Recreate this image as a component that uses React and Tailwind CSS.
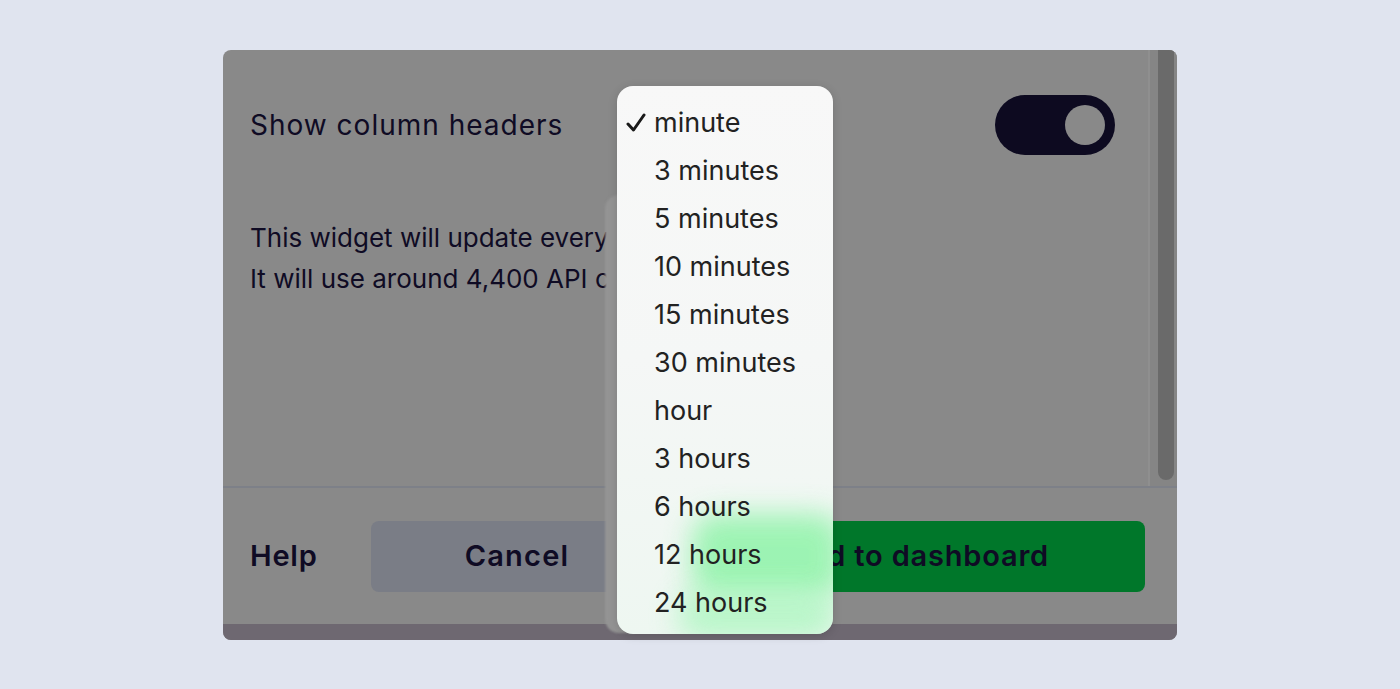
import React from "react";

const items = [
  "minute",
  "3 minutes",
  "5 minutes",
  "10 minutes",
  "15 minutes",
  "30 minutes",
  "hour",
  "3 hours",
  "6 hours",
  "12 hours",
  "24 hours",
];

export default function App() {
  return (
    <div className="relative w-full h-[689px] bg-[#e0e4ef] pt-[50px] pl-[223px] overflow-hidden" style={{ fontFamily: "Inter, 'Noto Sans', sans-serif" }}>
      <div className="w-[954px] h-[590px] rounded-[8px] overflow-hidden bg-[#898989] flex flex-col text-[#0f0b24]">
        <div className="flex h-[436px]">
          <div className="flex-1 pl-[27px] pr-[33px] pt-[45px]">
            <div className="flex items-center justify-between h-[60px]">
              <span className="text-[28px] leading-none tracking-[1px]">Show column headers</span>
              <div className="w-[120px] h-[60px] rounded-full bg-[#0d0a20] flex items-center justify-end pr-[10px]">
                <div className="w-[40px] h-[40px] rounded-full bg-[#898989]" />
              </div>
            </div>
            <div className="mt-[62px] text-[26px] leading-[41px]">
              <div>This widget will update every</div>
              <div>It will use around 4,400 API c</div>
            </div>
          </div>
          <div className="w-[29px] border-l-2 border-[#8f8f8f] bg-[#858585] flex justify-center pl-[4px]">
            <div className="w-[16px] h-[430px] rounded-b-full bg-[#6a6a6a]" />
          </div>
        </div>
        <div className="h-[2px] bg-[#7d8088]" />
        <div className="h-[136px] flex items-center pl-[27px] pr-[32px]">
          <span className="text-[29px] font-semibold tracking-[0.8px] w-[121px]">Help</span>
          <div className="w-[292px] h-[71px] rounded-[8px] bg-[#7a7d86] flex items-center justify-center text-[29px] font-semibold tracking-[1.2px]">
            Cancel
          </div>
          <div className="ml-[16px] flex-1 h-[71px] rounded-[8px] bg-[#00772a] flex items-center justify-center text-[29px] font-semibold tracking-[0.8px] pl-[12px]">
            Add to dashboard
          </div>
        </div>
        <div className="flex-1 bg-[#6e6871]" />
      </div>

      <div className="absolute left-[605px] top-[195px] w-[30px] h-[438px] rounded-l-[14px] bg-[#949494] blur-[1px]" />

      <div className="absolute left-[617px] top-[86px] w-[216px] h-[548px] rounded-[16px] overflow-hidden bg-gradient-to-b from-[#f8f8f8] via-[#f5f7f6] to-[#eef7f1] shadow-[0_2px_10px_rgba(0,0,0,0.15)]">
        <div className="absolute left-[75px] top-[428px] w-[150px] h-[85px] rounded-[24px] bg-[#8ef3a8] blur-[14px] opacity-85" />
        <div className="absolute left-[60px] top-[505px] w-[160px] h-[50px] rounded-[24px] bg-[#aef6c1] blur-[14px] opacity-80" />
        <div className="relative pt-[13px]" style={{ fontFamily: "Inter, sans-serif" }}>
          {items.map((it, i) => (
            <div key={it} className="h-[48px] flex items-center text-[27px] text-[#222222]">
              <div className="w-[37px] flex justify-end pr-[8px]">
                {i === 0 && (
                  <svg width="20" height="20" viewBox="0 0 20 20">
                    <path d="M2 11 L7.5 17 L18 2" fill="none" stroke="#1a1a1a" strokeWidth="3" strokeLinecap="round" strokeLinejoin="round" />
                  </svg>
                )}
              </div>
              <span>{it}</span>
            </div>
          ))}
        </div>
      </div>
    </div>
  );
}
